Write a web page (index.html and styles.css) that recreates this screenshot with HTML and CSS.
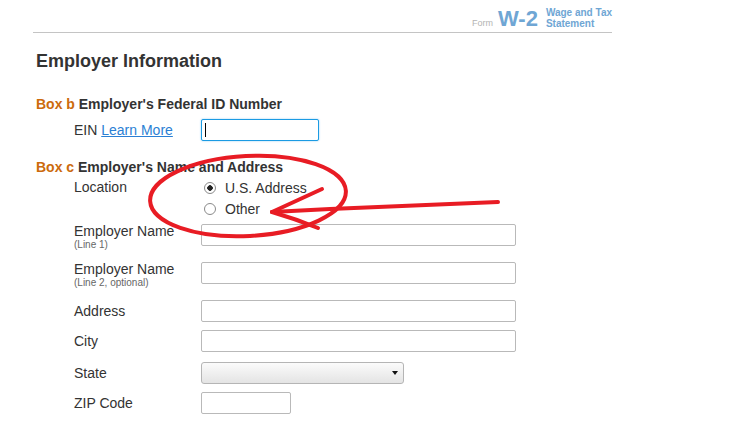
FILE: index.html
```html
<!DOCTYPE html>
<html>
<head>
    <meta charset="UTF-8">
    <title>W-2 Employer Information</title>
    <link rel="stylesheet" href="styles.css">
</head>
<body>
    <div class="page">
        <div class="form-header">
            <span class="form-word">Form</span>
            <span class="form-code">W-2</span>
            <span class="form-title">Wage and Tax<br>Statement</span>
        </div>

        <div class="content">
            <h1>Employer Information</h1>

            <div class="box-title"><span class="box-tag">Box b</span> Employer's Federal ID Number</div>
            <div class="field field-ein">
                <label class="field-label" for="ein">EIN <a href="#">Learn More</a></label>
                <div class="caret-wrap">
                    <input type="text" id="ein" class="input input-ein is-focused">
                </div>
            </div>

            <div class="box-title box-c"><span class="box-tag">Box c</span> Employer's Name and Address</div>
            <div class="field field-location">
                <span class="field-label">Location</span>
                <div class="radio-group">
                    <label class="radio-row"><input type="radio" name="loc" checked> U.S. Address</label>
                    <label class="radio-row"><input type="radio" name="loc"> Other</label>
                </div>
            </div>

            <div class="field field-top">
                <label class="field-label" for="name1">Employer Name<small>(Line 1)</small></label>
                <input type="text" id="name1" class="input">
            </div>
            <div class="field field-top">
                <label class="field-label" for="name2">Employer Name<small>(Line 2, optional)</small></label>
                <input type="text" id="name2" class="input">
            </div>
            <div class="field">
                <label class="field-label" for="address">Address</label>
                <input type="text" id="address" class="input">
            </div>
            <div class="field field-city">
                <label class="field-label" for="city">City</label>
                <input type="text" id="city" class="input">
            </div>
            <div class="field">
                <label class="field-label" for="state">State</label>
                <div class="select-wrap">
                    <select id="state" class="select"><option></option></select>
                </div>
            </div>
            <div class="field">
                <label class="field-label" for="zip">ZIP Code</label>
                <input type="text" id="zip" class="input input-zip">
            </div>
        </div>
    </div>

    <!-- red marker annotation drawn over the form -->
    <svg class="markup" width="754" height="425" viewBox="0 0 754 425">
        <g fill="none" stroke="#e81c24" stroke-width="4" stroke-linecap="round" stroke-linejoin="round">
            <ellipse cx="248" cy="196" rx="98" ry="40" transform="rotate(-3 248 196)"/>
            <path d="M498 202 L330 209 L272 212"/>
            <path d="M272 212 L322 189"/>
            <path d="M272 212 Q296 219 318 228"/>
        </g>
    </svg>
</body>
</html>
```

FILE: styles.css
```css
body {
    margin: 0;
    font-family: "Liberation Sans", Arial, sans-serif;
    color: #333;
    background: #fff;
}

.page {
    width: 579px;
    margin-left: 33px;
}

/* form header with W-2 mark */
.form-header {
    height: 30px;
    padding-bottom: 2px;
    border-bottom: 1px solid #c4c4c4;
    display: flex;
    justify-content: flex-end;
    align-items: flex-end;
}

.form-word {
    font-size: 9px;
    line-height: 9px;
    color: #b4b4b4;
    margin-bottom: 2px;
}

.form-code {
    font-size: 22px;
    line-height: 22px;
    font-weight: bold;
    color: #6fa6d4;
    margin-left: 5px;
}

.form-title {
    font-size: 10px;
    line-height: 10.5px;
    font-weight: bold;
    color: #6fa6d4;
    margin-left: 8px;
    margin-bottom: 1px;
}

.content {
    padding-left: 3px;
}

h1 {
    margin: 18px 0 0;
    font-size: 18px;
    line-height: 21px;
    font-weight: bold;
    color: #333;
}

.box-title {
    margin-top: 24px;
    font-size: 14px;
    line-height: 16px;
    font-weight: bold;
    color: #333;
}

.box-tag {
    color: #cc6a0c;
}

.box-c {
    margin-top: 18px;
}

.field {
    display: flex;
    align-items: center;
    margin-left: 38px;
    margin-bottom: 8px;
}

.field-ein {
    margin-top: 7px;
}

.field-top {
    align-items: flex-start;
    min-height: 30px;
}

.field-city {
    margin-bottom: 10px;
}

.field-label {
    flex: 0 0 127px;
    font-size: 14px;
    line-height: 15px;
}

.field-label small {
    display: block;
    font-size: 10px;
    line-height: 12px;
    color: #666;
}

.field-label a {
    color: #2b7fd4;
}

.input {
    box-sizing: border-box;
    width: 315px;
    height: 22px;
    margin: 0;
    border: 1px solid #b9b9b9;
    border-radius: 2px;
    padding: 0 4px;
    font: inherit;
    background: #fff;
}

.input-ein {
    width: 118px;
}

.input-zip {
    width: 90px;
}

.input.is-focused {
    border-color: #1b9be3;
    box-shadow: 0 0 2px #8cc9f0;
    outline: none;
}

.caret-wrap {
    position: relative;
}

.caret-wrap::after {
    content: "";
    position: absolute;
    left: 4px;
    top: 4px;
    width: 1px;
    height: 14px;
    background: #000;
}

/* location radios */
.field-location {
    align-items: flex-start;
    margin-top: 2px;
    margin-bottom: 5px;
}

.field-location .field-label {
    line-height: 21px;
}

.radio-group {
    display: flex;
    flex-direction: column;
}

.radio-row {
    display: flex;
    align-items: center;
    height: 21px;
    font-size: 14px;
    color: #333;
}

.radio-row input {
    appearance: none;
    width: 12px;
    height: 12px;
    margin: 0 9px 0 3px;
    border: 1px solid #8a8a8a;
    border-radius: 50%;
    background: #fff;
    box-sizing: border-box;
}

.radio-row input:checked {
    background: radial-gradient(circle, #222 0 2.5px, #fff 3px);
}

/* state dropdown */
.select-wrap {
    position: relative;
}

.select {
    appearance: none;
    display: block;
    box-sizing: border-box;
    width: 203px;
    height: 22px;
    margin: 0;
    border: 1px solid #b5b5b5;
    border-radius: 3px;
    background: linear-gradient(#fbfbfb, #e4e4e4);
    font: inherit;
}

.select-wrap::after {
    content: "";
    position: absolute;
    right: 6px;
    top: 9px;
    border-left: 3.5px solid transparent;
    border-right: 3.5px solid transparent;
    border-top: 4px solid #111;
}

.markup {
    position: absolute;
    top: 0;
    left: 0;
    pointer-events: none;
}
```
